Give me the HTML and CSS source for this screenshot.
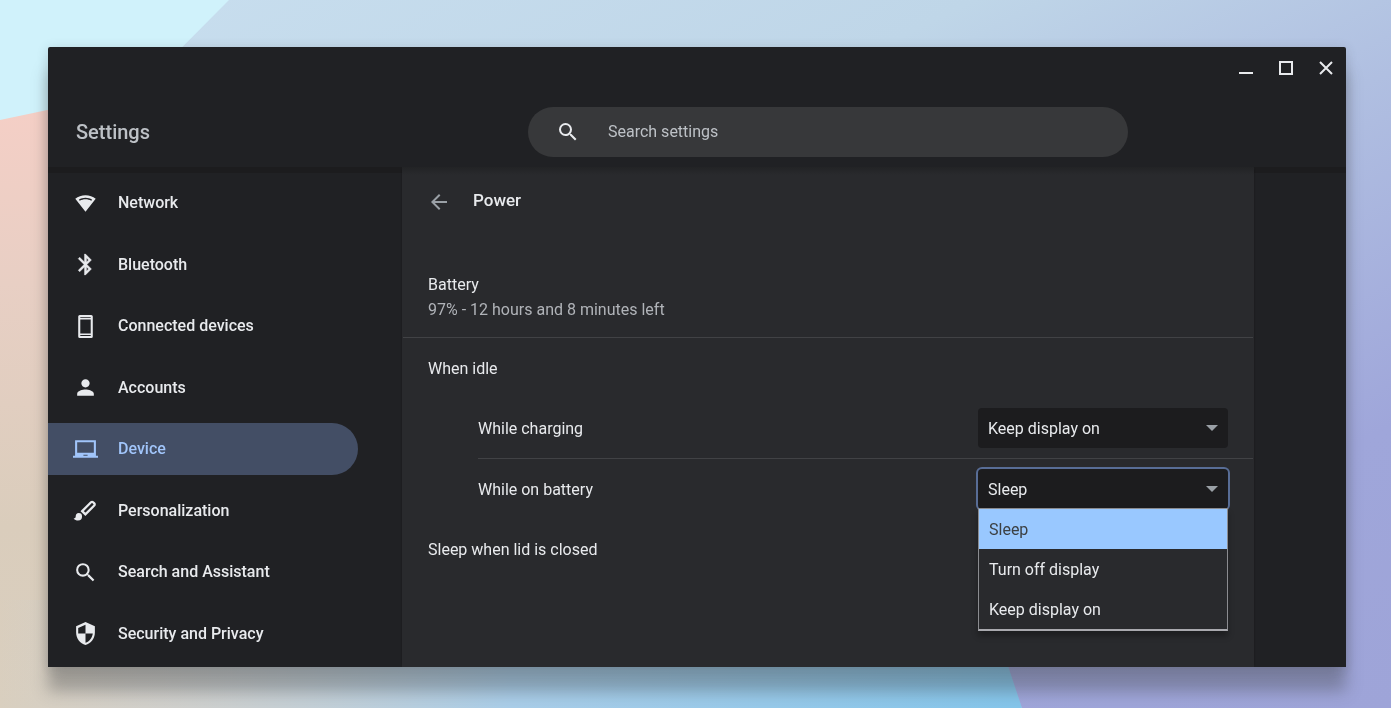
FILE: index.html
```html
<!DOCTYPE html>
<html lang="en">
<head>
<meta charset="utf-8">
<title>Settings - Power</title>
<link rel="stylesheet" href="styles.css">
</head>
<body>
<svg class="wallpaper" viewBox="0 0 1391 708" preserveAspectRatio="none" aria-hidden="true">
  <defs>
    <linearGradient id="sky" x1="0" y1="0" x2="1" y2="1">
      <stop offset="0" stop-color="#c9dfef"/>
      <stop offset=".35" stop-color="#bfd6e8"/>
      <stop offset=".55" stop-color="#b0bfe1"/>
      <stop offset=".8" stop-color="#9fa6da"/>
      <stop offset="1" stop-color="#9ea4d8"/>
    </linearGradient>
    <linearGradient id="sand" x1="0" y1="0" x2="0" y2="1">
      <stop offset="0" stop-color="#f5cfc6"/>
      <stop offset=".3" stop-color="#e8cfc4"/>
      <stop offset=".7" stop-color="#dacdbc"/>
      <stop offset="1" stop-color="#d9cfbf"/>
    </linearGradient>
    <linearGradient id="sea" x1="0" y1="0" x2="1" y2="0">
      <stop offset="0" stop-color="#c4d0dc" stop-opacity="0"/>
      <stop offset=".15" stop-color="#c4d0dc" stop-opacity=".4"/>
      <stop offset=".5" stop-color="#a9cde8"/>
      <stop offset="1" stop-color="#84c5ea"/>
    </linearGradient>
  </defs>
  <rect width="1391" height="708" fill="url(#sky)"/>
  <path d="M0 0H229L100 130H0z" fill="#d0f2fb"/>
  <path d="M0 120L90 101L780 300L1022 708H0z" fill="url(#sand)"/>
  <path d="M0 600H986L1022 708H0z" fill="url(#sea)"/>
</svg>

<div class="window">
  <header class="header">
    <h1 class="app-title">Settings</h1>
    <div class="search">
      <svg class="search-icon" viewBox="0 0 24 24" aria-hidden="true"><path d="M15.500 14h-.79l-.28-.27A6.470 6.470 0 0 0 16 9.500 6.500 6.500 0 1 0 9.500 16c1.610 0 3.090-.59 4.230-1.570l.27.28v.79l5 4.990L20.490 19l-4.990-5zm-6 0C7.010 14 5 11.990 5 9.500S7.010 5 9.500 5 14 7.010 14 9.500 11.990 14 9.500 14z"/></svg>
      <input class="search-input" type="text" placeholder="Search settings" aria-label="Search settings">
    </div>
    <div class="controls">
      <button class="control" type="button" aria-label="Minimize"><svg viewBox="0 0 16 16"><path d="M1 13h14" stroke-width="2"/></svg></button>
      <button class="control" type="button" aria-label="Maximize"><svg viewBox="0 0 16 16"><path d="M2 2h12v12H2z" stroke-width="2"/></svg></button>
      <button class="control" type="button" aria-label="Close"><svg viewBox="0 0 16 16"><path d="M2 2l12 12M14 2L2 14" stroke-width="2"/></svg></button>
    </div>
  </header>

  <div class="body">
    <nav class="sidebar">
      <a class="nav-item" href="#network"><svg class="icon" viewBox="0 0 24 24"><path fill-rule="evenodd" d="M12 4C8.200 4 4.900 5.300 2.200 7.500L12 20l9.800-12.500C19.100 5.300 15.800 4 12 4zM5.600 8.300C7.500 7.200 9.700 6.500 12 6.500s4.500.7 6.400 1.800l-.9 1.100C15.900 8.500 14 8 12 8s-3.900.5-5.500 1.400z"/></svg>Network</a>
      <a class="nav-item" href="#bluetooth"><svg class="icon" viewBox="0 0 24 24"><path d="M17.710 7.710L12 2h-1v7.590L6.410 5 5 6.410 10.590 12 5 17.590 6.410 19 11 14.410V22h1l5.710-5.710-4.300-4.290 4.300-4.290zM13 5.830l1.880 1.880L13 9.590V5.830zm1.880 10.460L13 18.170v-3.760l1.880 1.880z" stroke="currentColor" stroke-width=".4"/></svg>Bluetooth</a>
      <a class="nav-item" href="#devices"><svg class="icon" viewBox="0 0 24 24"><path fill-rule="evenodd" d="M6.500 1h11A1.500 1.500 0 0 1 19 2.500v19a1.500 1.500 0 0 1-1.500 1.500h-11A1.500 1.500 0 0 1 5 21.500v-19A1.500 1.500 0 0 1 6.500 1zM7 3v.8h10V3zM7 5.300v13.400h10V5.300zM7 20.200v.8h10v-.8z"/></svg>Connected devices</a>
      <a class="nav-item" href="#accounts"><svg class="icon" viewBox="0 0 24 24"><path d="M12 12c2.210 0 4-1.790 4-4s-1.790-4-4-4-4 1.790-4 4 1.790 4 4 4zm0 2c-2.670 0-8 1.340-8 4v2h16v-2c0-2.660-5.330-4-8-4z"/></svg>Accounts</a>
      <a class="nav-item selected" href="#device" aria-current="page"><svg class="icon" viewBox="0 0 24 24"><path fill-rule="evenodd" d="M22 18V3H2v15H0v2h24v-2h-2zM4 5h16v10H4zM10 17h4v1h-4z"/></svg>Device</a>
      <a class="nav-item" href="#personalization"><svg class="icon" viewBox="0 0 24 24"><path d="M5.500 14.500a3.200 3.200 0 0 0-2.900 3.200c0 1.100-.8 1.800-2 1.900C1.700 21 3.200 21.600 4.800 21.600a3.900 3.900 0 0 0 3.900-3.900 3.200 3.200 0 0 0-3.200-3.200z"/><path d="M8.800 12.600L17.300 4.100a1.400 1.400 0 0 1 2 0l1.100 1.100a1.400 1.400 0 0 1 0 2l-8.500 8.500z" fill="none" stroke="currentColor" stroke-width="2.200"/></svg>Personalization</a>
      <a class="nav-item" href="#search"><svg class="icon" viewBox="0 0 24 24"><path d="M15.500 14h-.79l-.28-.27A6.470 6.470 0 0 0 16 9.500 6.500 6.500 0 1 0 9.500 16c1.610 0 3.090-.59 4.230-1.570l.27.28v.79l5 4.990L20.490 19l-4.990-5zm-6 0C7.010 14 5 11.990 5 9.500S7.010 5 9.500 5 14 7.010 14 9.500 11.990 14 9.500 14z"/></svg>Search and Assistant</a>
      <a class="nav-item" href="#security"><svg class="icon" viewBox="0 0 24 24"><path fill-rule="evenodd" d="M12 1L3 5v6c0 5.550 3.840 10.740 9 12 5.160-1.260 9-6.450 9-12V5l-9-4zm0 2.500V12H5V6.600zM12 12h7c-.53 4.120-3.280 7.790-7 8.940z"/></svg>Security and Privacy</a>
    </nav>

    <main class="panel">
      <div class="page-head">
        <button class="back" type="button" aria-label="Back"><svg viewBox="0 0 24 24"><path d="M20 11H7.830l5.590-5.590L12 4l-8 8 8 8 1.410-1.410L7.830 13H20v-2z"/></svg></button>
        <h2 class="page-title">Power</h2>
      </div>
      <section class="battery">
        <div>Battery</div>
        <div class="secondary">97% - 12 hours and 8 minutes left</div>
      </section>
      <div class="row"><span class="label">When idle</span></div>
      <div class="row sub divided">
        <label class="label" for="charging">While charging</label>
        <div class="field">
          <select class="select" id="charging"><option>Keep display on</option><option>Sleep</option><option>Turn off display</option></select>
          <svg class="caret" viewBox="0 0 12 6" aria-hidden="true"><path d="M0 0h12L6 6z"/></svg>
        </div>
      </div>
      <div class="row sub">
        <label class="label" for="on-battery">While on battery</label>
        <div class="field">
          <select class="select active" id="on-battery"><option>Sleep</option><option>Turn off display</option><option>Keep display on</option></select>
          <svg class="caret" viewBox="0 0 12 6" aria-hidden="true"><path d="M0 0h12L6 6z"/></svg>
          <ul class="menu" role="listbox" aria-label="While on battery">
            <li class="choice highlighted" role="option" aria-selected="true">Sleep</li>
            <li class="choice" role="option" aria-selected="false">Turn off display</li>
            <li class="choice" role="option" aria-selected="false">Keep display on</li>
          </ul>
        </div>
      </div>
      <div class="row"><span class="label">Sleep when lid is closed</span></div>
    </main>
  </div>
</div>
</body>
</html>
```
FILE: styles.css
```css
* { box-sizing: border-box; }

body {
  margin: 0;
  min-height: 100vh;
  padding: 47px 45px 41px 48px;
  display: flex;
  background: #b9cee4;
  color: #e8eaed;
  font: 16px/24px Roboto, sans-serif;
}

.wallpaper {
  position: fixed;
  inset: 0;
  width: 100%;
  height: 100%;
  z-index: -1;
}

.window {
  flex: 1;
  display: flex;
  flex-direction: column;
  background: #202124;
  border-radius: 2px 2px 0 0;
  box-shadow: 0 24px 16px rgba(60, 64, 67, .36), 0 2px 12px rgba(60, 64, 67, .2);
}

.header {
  height: 120px;
  display: grid;
  grid-template-columns: 354px 1fr 92px;
}

.app-title {
  margin: 0;
  padding: 73px 0 0 28px;
  font-size: 20px;
  font-weight: 500;
  line-height: 24px;
  color: #bdc1c6;
}

.search {
  width: 100%;
  max-width: 600px;
  height: 50px;
  margin: 60px auto 0;
  padding: 0 28px;
  display: flex;
  align-items: center;
  gap: 28px;
  border-radius: 25px;
  background: #37383a;
}

.search-icon {
  flex: none;
  width: 24px;
  height: 24px;
  fill: #e8eaed;
}

.search-input {
  flex: 1;
  min-width: 0;
  padding: 0;
  border: 0;
  outline: 0;
  background: none;
  color: #e8eaed;
  font: inherit;
}

.search-input::placeholder {
  color: #bdc1c6;
  opacity: 1;
}

.controls {
  display: flex;
  align-items: flex-start;
  justify-content: flex-end;
  gap: 24px;
  padding: 13px 12px 0 0;
}

.control {
  flex: none;
  width: 16px;
  height: 16px;
  padding: 0;
  border: 0;
  background: none;
}

.control svg {
  display: block;
  width: 16px;
  height: 16px;
  fill: none;
  stroke: #e8eaed;
}

.body {
  flex: 1;
  display: grid;
  grid-template-columns: 354px 1fr 92px;
  background: linear-gradient(#1c1c1e 6px, #202124 6px);
}

.sidebar {
  display: flex;
  flex-direction: column;
  justify-content: space-between;
  padding: 10px 44px 7px 0;
}

.nav-item {
  height: 52px;
  padding-left: 25px;
  display: flex;
  align-items: center;
  gap: 20px;
  border-radius: 0 26px 26px 0;
  color: #e8eaed;
  font-weight: 500;
  text-decoration: none;
}

.nav-item.selected {
  background: #434e65;
  color: #a1c5fa;
}

.icon {
  width: 25px;
  height: 25px;
  fill: currentColor;
}

.panel {
  padding: 0 1px;
  background: linear-gradient(#222325, #292a2d 8px);
  box-shadow: -2px 0 2px -2px rgba(0, 0, 0, .3), 2px 0 2px -2px rgba(0, 0, 0, .3);
}

.page-head {
  height: 93px;
  padding: 21px 24px 0;
  display: flex;
  align-items: flex-start;
  gap: 22px;
}

.back {
  width: 24px;
  height: 24px;
  margin-top: 2px;
  padding: 0;
  border: 0;
  background: none;
}

.back svg {
  display: block;
  fill: #9aa0a6;
}

.page-title {
  margin: 0;
  font-size: 17px;
  font-weight: 500;
  line-height: 24px;
}

.battery {
  padding: 12px 25px 15px;
  border-bottom: 1px solid #414245;
  line-height: 25px;
}

.secondary { color: #b0b3b8; }

.row {
  min-height: 60px;
  padding: 0 25px;
  display: flex;
  align-items: center;
  justify-content: space-between;
}

.row.sub {
  margin-left: 75px;
  padding-left: 0;
}

.row.divided {
  min-height: 61px;
  border-bottom: 1px solid #414245;
}

.label { padding-top: 2px; }

.field {
  position: relative;
  width: 250px;
}

.select {
  display: block;
  width: 100%;
  height: 40px;
  padding: 2px 10px 0;
  appearance: none;
  border: 0;
  border-radius: 4px;
  outline: 0;
  background: #1c1c1e;
  color: #e8eaed;
  font: inherit;
}

.select.active { box-shadow: 0 0 0 2px #586d96; }

.caret {
  position: absolute;
  top: 17px;
  right: 10px;
  width: 12px;
  height: 6px;
  fill: #9aa0a6;
  pointer-events: none;
}

.menu {
  position: absolute;
  top: 39px;
  left: 0;
  right: 0;
  margin: 0;
  padding: 0;
  list-style: none;
  border: 1px solid #8b8c90;
  border-bottom: 2px solid #a9a9ae;
  background: #292a2d;
  box-shadow: 0 5px 6px rgba(0, 0, 0, .3);
}

.choice {
  height: 40px;
  padding: 2px 10px 0;
  line-height: 38px;
}

.choice.highlighted {
  background: #99c8ff;
  color: #3c4043;
}
```
